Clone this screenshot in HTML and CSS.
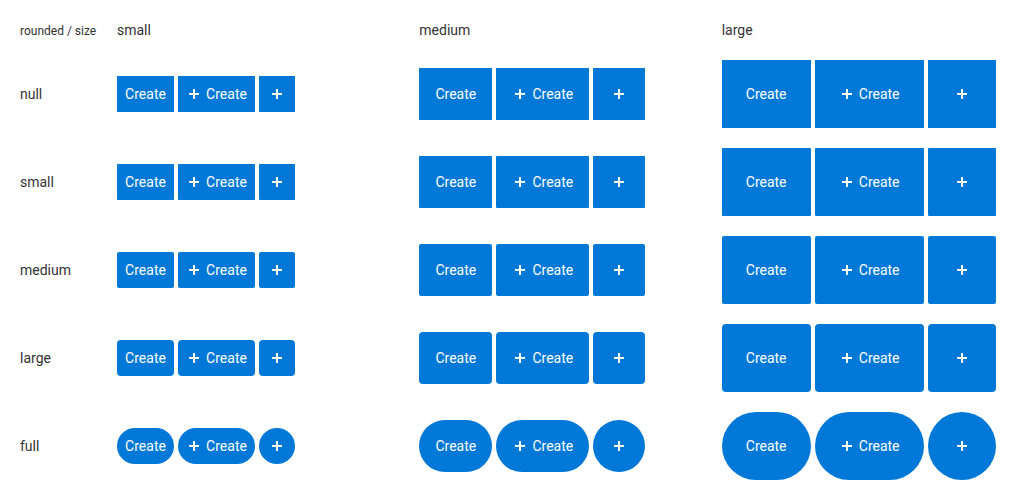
FILE: index.html
```html
<!DOCTYPE html>
<html lang="en">
<head>
<meta charset="utf-8">
<meta name="viewport" content="width=device-width, initial-scale=1">
<title>Button sizes and corners</title>
<link rel="stylesheet" href="styles.css">
</head>
<body>
<svg class="defs" aria-hidden="true">
  <symbol id="plus" viewBox="0 0 16 16"><path d="M7 3h2v4h4v2H9v4H7V9H3V7h4z"/></symbol>
</svg>
<table class="matrix">
  <thead>
    <tr>
      <th class="corner" scope="col">rounded / size</th>
      <th scope="col">small</th>
      <th scope="col">medium</th>
      <th scope="col">large</th>
    </tr>
  </thead>
  <tbody id="rows"></tbody>
</table>
<script src="script.js"></script>
</body>
</html>
```

FILE: styles.css
```css
body {
  margin: 0;
  padding: 10px;
  background: #fff;
  color: #333;
  font: 14px/20px Roboto, sans-serif;
}

.defs {
  display: none;
}

.matrix {
  width: 100%;
  border-collapse: collapse;
  table-layout: fixed;
}

.matrix th,
.matrix td {
  padding: 10px;
  font-weight: 400;
  text-align: left;
  vertical-align: middle;
  white-space: nowrap;
}

.matrix thead th {
  vertical-align: baseline;
}

.matrix .corner {
  width: 77px;
  font-size: 12px;
  line-height: 16px;
}

.group {
  display: flex;
  gap: 4px;
}

.button {
  display: inline-flex;
  align-items: center;
  justify-content: center;
  gap: 4px;
  margin: 0;
  border: 0;
  background: #0078d7;
  color: #fff;
  font: inherit;
  cursor: pointer;
}

.button:hover {
  background: #106ebe;
}

.label {
  min-width: 41px;
}

.size-small { padding: 8px; }
.size-medium { padding: 16px; }
.size-large { padding: 24px; }

.rounded-null { border-radius: 0; }
.rounded-small { border-radius: 1px; }
.rounded-medium { border-radius: 2px; }
.rounded-large { border-radius: 4px; }
.rounded-full { border-radius: 100px; }

.icon {
  width: 16px;
  height: 16px;
  fill: currentColor;
}

.icon-only .icon {
  padding: 2px;
}
```

FILE: script.js
```js
const icon = '<svg class="icon" aria-hidden="true"><use href="#plus"/></svg>';
const label = '<span class="label">Create</span>';

const group = (rounded, size) => {
  const cls = `button size-${size} rounded-${rounded}`;
  return `<td><div class="group">
    <button type="button" class="${cls}">${label}</button>
    <button type="button" class="${cls}">${icon}${label}</button>
    <button type="button" class="${cls} icon-only" aria-label="Create">${icon}</button>
  </div></td>`;
};

document.getElementById('rows').innerHTML = ['null', 'small', 'medium', 'large', 'full']
  .map((rounded) => `<tr><th scope="row">${rounded}</th>${
    ['small', 'medium', 'large'].map((size) => group(rounded, size)).join('')
  }</tr>`)
  .join('');
```
